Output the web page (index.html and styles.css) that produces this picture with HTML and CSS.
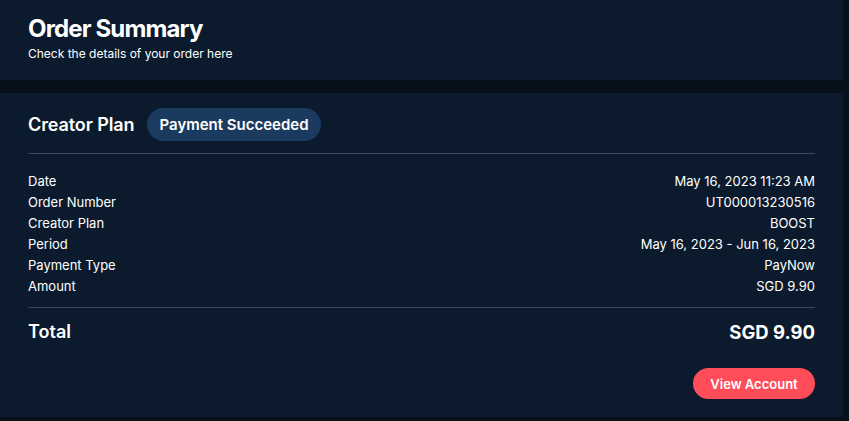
FILE: index.html
```html
<!DOCTYPE html>
<html>
<head>
<meta charset="utf-8">
<link rel="stylesheet" href="styles.css">
</head>
<body>
<div class="page">
  <header class="card head">
    <h1 class="title">Order Summary</h1>
    <p class="subtitle">Check the details of your order here</p>
  </header>
  <section class="card order">
    <div class="plan-row">
      <span class="plan-name">Creator Plan</span>
      <span class="badge">Payment Succeeded</span>
    </div>
    <hr class="divider">
    <div class="details">
      <div class="row"><span>Date</span><span>May 16, 2023 11:23 AM</span></div>
      <div class="row"><span>Order Number</span><span>UT000013230516</span></div>
      <div class="row"><span>Creator Plan</span><span>BOOST</span></div>
      <div class="row"><span>Period</span><span>May 16, 2023 - Jun 16, 2023</span></div>
      <div class="row"><span>Payment Type</span><span>PayNow</span></div>
      <div class="row"><span>Amount</span><span>SGD 9.90</span></div>
    </div>
    <hr class="divider divider-2">
    <div class="total"><span>Total</span><span class="total-amount">SGD 9.90</span></div>
    <div class="actions"><button class="btn">View Account</button></div>
  </section>
</div>
</body>
</html>
```
FILE: styles.css
```css
html, body {
  margin: 0;
  padding: 0;
  background: #06111b;
  font-family: Inter, "Noto Sans", sans-serif;
  color: #ffffff;
}
.page {
  width: 843px;
  display: flex;
  flex-direction: column;
  gap: 13px;
}
.card {
  background: #0b1b2d;
  padding: 0 28px;
}
.head {
  height: 80px;
  padding-top: 14px;
  box-sizing: border-box;
}
.title {
  margin: 0;
  font-size: 24px;
  line-height: 30px;
  font-weight: 700;
  letter-spacing: -0.85px;
}
.subtitle {
  margin: 2px 0 0;
  font-size: 12px;
  line-height: 15px;
  font-weight: 400;
}
.order {
  padding-top: 15px;
  padding-bottom: 18px;
}
.plan-row {
  display: flex;
  align-items: center;
  gap: 13px;
  height: 33px;
}
.plan-name {
  font-size: 18px;
  font-weight: 600;
  letter-spacing: -0.1px;
}
.badge {
  background: #1b3a60;
  height: 33px;
  line-height: 33px;
  padding: 0 12px;
  border-radius: 17px;
  font-size: 15px;
  font-weight: 600;
}
.divider {
  border: 0;
  height: 1px;
  background: #3a4a5d;
  margin: 12px 0 17px;
}
.divider-2 {
  margin: 10px 0 12px;
}
.details .row {
  display: flex;
  justify-content: space-between;
  font-size: 13px;
  line-height: 21px;
}
.total {
  display: flex;
  justify-content: space-between;
  font-size: 18px;
  font-weight: 600;
  line-height: 24px;
}
.total-amount {
  font-size: 18.5px;
  font-weight: 700;
}
.actions {
  display: flex;
  justify-content: flex-end;
  margin-top: 24px;
}
.btn {
  background: #fe4d59;
  color: #ffffff;
  border: 0;
  height: 31px;
  width: 122px;
  border-radius: 16px;
  font-family: Inter, "Noto Sans", sans-serif;
  font-size: 13px;
  font-weight: 600;
  padding: 0;
}
```
